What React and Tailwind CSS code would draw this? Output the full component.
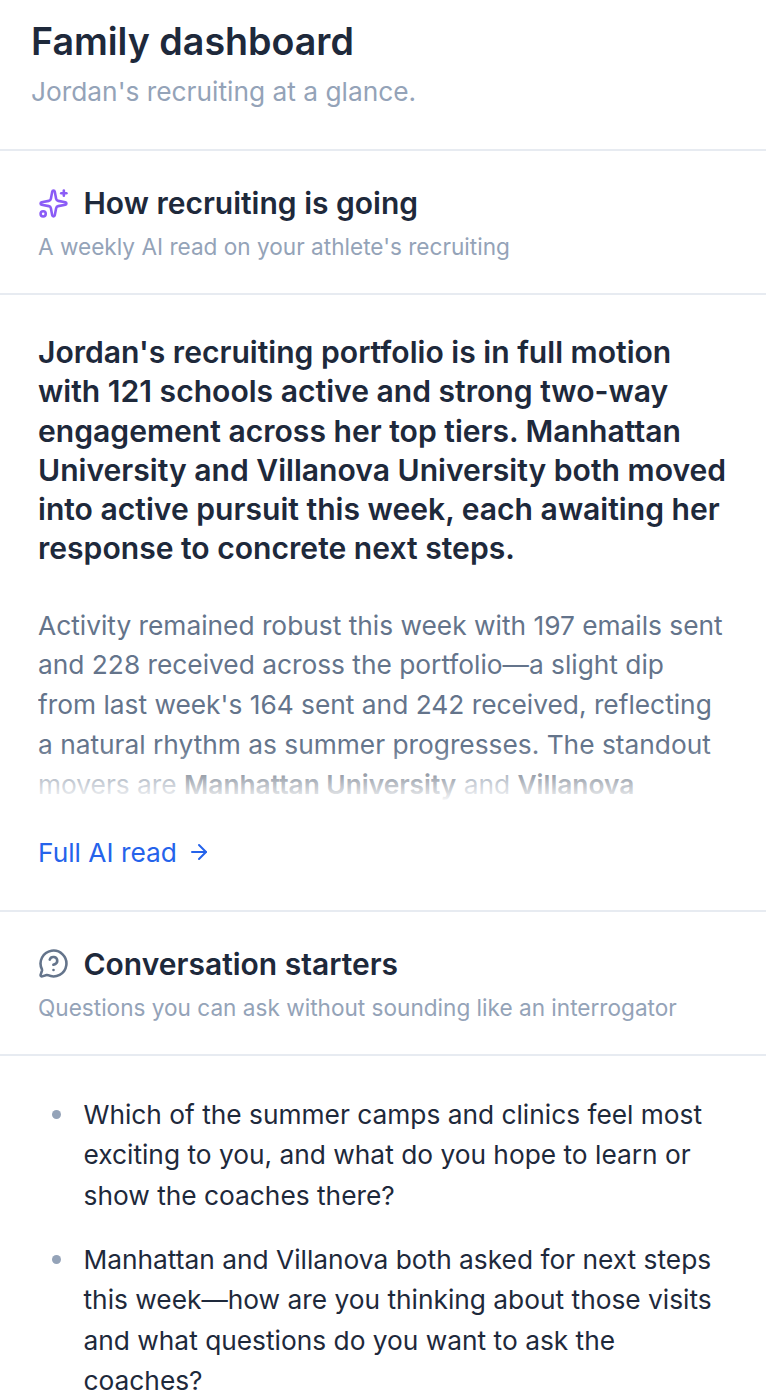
import { ArrowRight, MessageCircleQuestion, Sparkles } from "lucide-react";

function SectionHeader({ icon: Icon, iconClass, title, subtitle }) {
  return (
    <div className="border-b-2 border-[#e7ebf1] px-[38px] pt-[32px] pb-[30px]">
      <div className="flex items-center gap-[14.5px]">
        <Icon className={`h-[31px] w-[31px] shrink-0 ${iconClass}`} strokeWidth={2} />
        <h2 className="text-[30px] leading-[40px] font-semibold text-[#1e293b]">{title}</h2>
      </div>
      <p className="mt-[7px] text-[22.6px] leading-[33px] text-[#94a3b8]">{subtitle}</p>
    </div>
  );
}

export default function App() {
  return (
    <div className="h-[1397px] w-[766px] overflow-hidden bg-white font-['Inter',sans-serif]">
      <div className="border-b-2 border-[#e7ebf1] px-[31px] pt-[18px] pb-[38px]">
        <h1 className="text-[37.6px] leading-[48px] font-semibold text-[#1e293b]">Family dashboard</h1>
        <p className="mt-[6px] text-[26.3px] leading-[39px] text-[#94a3b8]">Jordan's recruiting at a glance.</p>
      </div>

      <SectionHeader
        icon={Sparkles}
        iconClass="text-[#8b5cf6]"
        title="How recruiting is going"
        subtitle="A weekly AI read on your athlete's recruiting"
      />

      <div className="border-b-2 border-[#e7ebf1] px-[38px] pt-[38px] pb-[38px]">
        <p className="text-[30.1px] leading-[39.3px] font-semibold text-[#1e293b]">
          Jordan's recruiting portfolio is in full motion with 121 schools active and strong two-way engagement across her top tiers. Manhattan University and Villanova University both moved into active pursuit this week, each awaiting her response to concrete next steps.
        </p>
        <div className="relative mt-[37px] h-[197px] overflow-hidden">
          <p className="text-[26.3px] leading-[39.7px] text-[#64748b]">
            Activity remained robust this week with 197 emails sent and 228 received across the portfolio—a slight dip from last week's 164 sent and 242 received, reflecting a natural rhythm as summer progresses. The standout movers are{" "}
            <strong className="font-semibold text-[#334155]">Manhattan University</strong> and <strong className="font-semibold text-[#334155]">Villanova University</strong>
          </p>
          <div className="absolute inset-x-0 bottom-0 h-[56px] bg-gradient-to-t from-white to-transparent" />
        </div>
        <a className="mt-[30px] flex items-center gap-[10px] text-[26.3px] leading-[39px] text-[#2563eb]">
          Full AI read
          <ArrowRight className="h-[24px] w-[24px]" strokeWidth={2} />
        </a>
      </div>

      <SectionHeader
        icon={MessageCircleQuestion}
        iconClass="text-[#64748b]"
        title="Conversation starters"
        subtitle="Questions you can ask without sounding like an interrogator"
      />

      <ul className="flex flex-col gap-[23px] px-[38px] pt-[39px]">
        <li className="flex">
          <span className="mt-[15px] ml-[14px] h-[9px] w-[9px] shrink-0 rounded-full bg-[#94a3b8]" />
          <span className="ml-[22.5px] text-[26.3px] leading-[40.6px] text-[#1e293b]">
            Which of the summer camps and clinics feel most exciting to you, and what do you hope to learn or show the coaches there?
          </span>
        </li>
        <li className="flex">
          <span className="mt-[15px] ml-[14px] h-[9px] w-[9px] shrink-0 rounded-full bg-[#94a3b8]" />
          <span className="ml-[22.5px] text-[26.3px] leading-[40.6px] text-[#1e293b]">
            Manhattan and Villanova both asked for next steps this week—how are you thinking about those visits and what questions do you want to ask the coaches?
          </span>
        </li>
      </ul>
    </div>
  );
}
